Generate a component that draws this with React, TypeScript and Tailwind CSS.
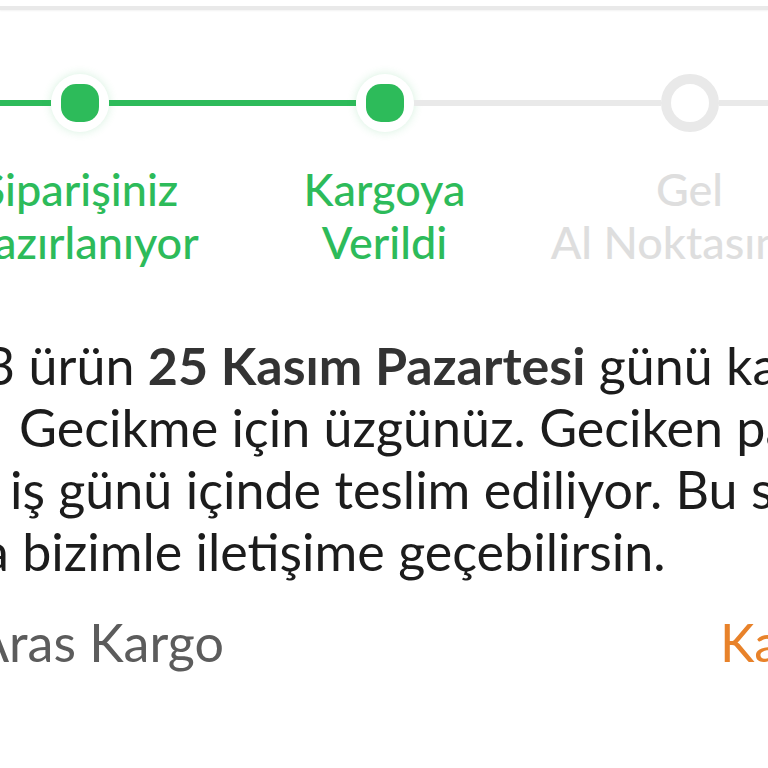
const steps = [
  { title: ["Siparişiniz", "Hazırlanıyor"], left: true, dot: "done", right: true },
  { title: ["Kargoya", "Verildi"], left: true, dot: "done", right: false },
  { title: ["Gel", "Al Noktasında"], left: false, dot: "todo", right: false },
  { title: ["Teslim", "Edildi"], left: false, dot: "todo", right: false },
];

const Line = ({ active }: { active: boolean }) => (
  <div className={active ? "h-[6px] flex-1 bg-[#2dbb5a]" : "h-[6px] flex-1 bg-[#e9e9e9]"}></div>
);

const App = () => {
  return (
    <div
      className="relative w-[768px] h-[768px] overflow-hidden bg-white"
      style={{ fontFamily: "Lato, 'Noto Sans', sans-serif" }}
    >
      {/* card edge above */}
      <div className="mt-[6px] h-[4px] bg-[#e9e9e9] shadow-[0_1px_2px_rgba(0,0,0,0.05)]"></div>

      {/* stepper */}
      <div className="mt-[64px] ml-[-73px] flex">
        {steps.map((s, i) => (
          <div key={i} className="w-[305px] shrink-0 flex flex-col items-center">
            <div className="w-full flex items-center">
              <Line active={s.left} />
              {s.dot === "done" ? (
                <div className="w-[58px] h-[58px] rounded-full bg-white shadow-[0_0_10px_rgba(45,187,90,0.2)] flex items-center justify-center">
                  <div className="w-[38px] h-[38px] rounded-[15px] bg-[#2dbb5a]"></div>
                </div>
              ) : (
                <div className="w-[58px] h-[58px] rounded-full bg-white border-[10px] border-[#e9e9e9]"></div>
              )}
              <Line active={s.right} />
            </div>
            <div
              className={
                s.dot === "done"
                  ? "mt-[31px] text-center whitespace-nowrap text-[45px] leading-[53px] font-medium text-[#2dbb5a]"
                  : "mt-[31px] text-center whitespace-nowrap text-[45px] leading-[53px] font-medium text-[#dedede]"
              }
            >
              <div>{s.title[0]}</div>
              <div>{s.title[1]}</div>
            </div>
          </div>
        ))}
      </div>

      {/* message */}
      <div className="mt-[65px] text-[52px] leading-[62px] text-[#1c1c1c] whitespace-nowrap">
        <div className="ml-[-15px]">
          3 ürün <span className="font-bold text-[#333333]">25 Kasım Pazartesi</span> günü kargoya verildi.
        </div>
        <div className="ml-[19px]">Gecikme için üzgünüz. Geciken paketler</div>
        <div className="ml-[10px]">iş günü içinde teslim ediliyor. Bu süre</div>
        <div className="ml-[-17px]">a bizimle iletişime geçebilirsin.</div>
      </div>

      {/* carrier row */}
      <div className="mt-[29px] flex items-center text-[52px] leading-[62px] whitespace-nowrap">
        <div className="ml-[-26px] text-[#5c5c5c]">Aras Kargo</div>
        <div className="ml-auto w-[48px] overflow-hidden text-[#e8822a]">Kargo Takip</div>
      </div>
    </div>
  );
};

export default App;
